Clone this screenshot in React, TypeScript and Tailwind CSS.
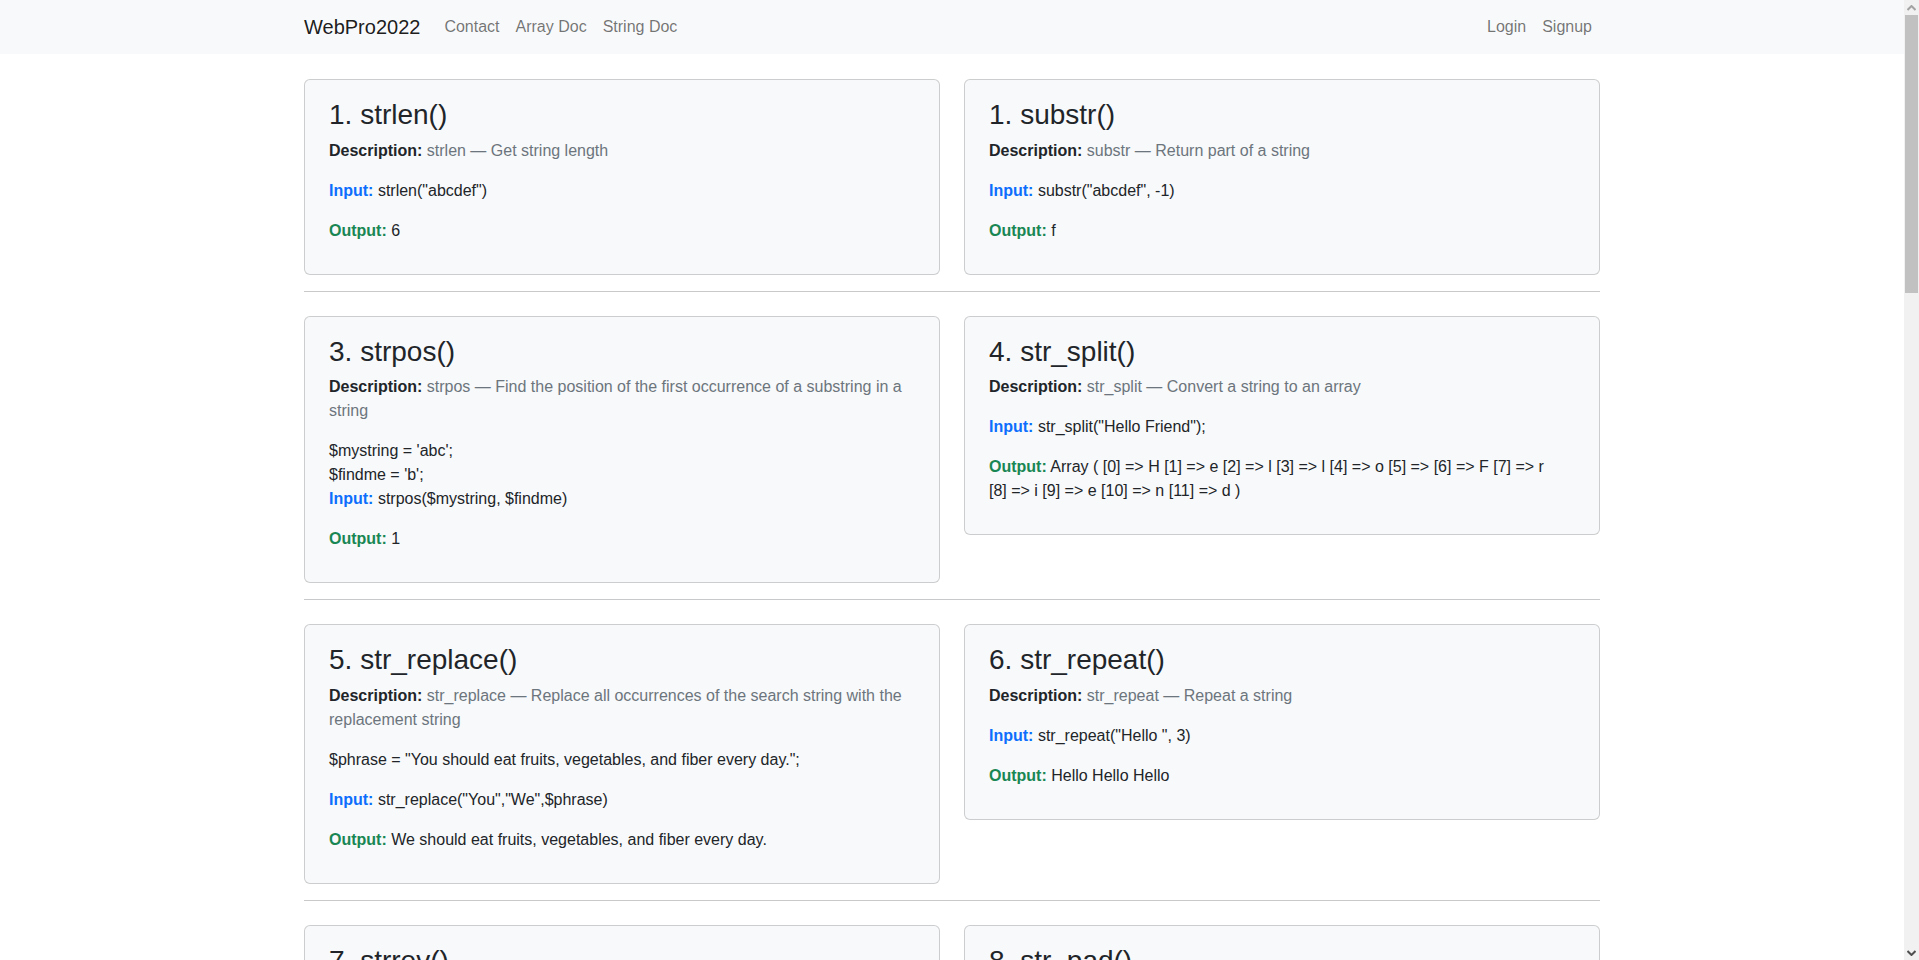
import type { ReactNode } from "react";

interface Doc {
  title: string;
  name: string;
  desc: string;
  pre?: ReactNode;
  preOwn?: boolean;
  input: string;
  output: ReactNode;
}

const rows: Doc[][] = [
  [
    {
      title: "1. strlen()",
      name: "strlen",
      desc: "Get string length",
      input: 'strlen("abcdef")',
      output: "6",
    },
    {
      title: "1. substr()",
      name: "substr",
      desc: "Return part of a string",
      input: 'substr("abcdef", -1)',
      output: "f",
    },
  ],
  [
    {
      title: "3. strpos()",
      name: "strpos",
      desc: "Find the position of the first occurrence of a substring in a string",
      pre: (
        <>
          $mystring = 'abc';
          <br />
          $findme = 'b';
          <br />
        </>
      ),
      input: "strpos($mystring, $findme)",
      output: "1",
    },
    {
      title: "4. str_split()",
      name: "str_split",
      desc: "Convert a string to an array",
      input: 'str_split("Hello Friend");',
      // segoe wraps before [8], the fallback font doesn't
      output: (
        <>
          Array ( [0] =&gt; H [1] =&gt; e [2] =&gt; l [3] =&gt; l [4] =&gt; o [5] =&gt; [6] =&gt; F [7] =&gt; r
          <br />
          [8] =&gt; i [9] =&gt; e [10] =&gt; n [11] =&gt; d )
        </>
      ),
    },
  ],
  [
    {
      title: "5. str_replace()",
      name: "str_replace",
      desc: "Replace all occurrences of the search string with the replacement string",
      pre: '$phrase = "You should eat fruits, vegetables, and fiber every day.";',
      preOwn: true,
      input: 'str_replace("You","We",$phrase)',
      output: "We should eat fruits, vegetables, and fiber every day.",
    },
    {
      title: "6. str_repeat()",
      name: "str_repeat",
      desc: "Repeat a string",
      input: 'str_repeat("Hello ", 3)',
      output: "Hello Hello Hello",
    },
  ],
  [
    {
      title: "7. strrev()",
      name: "strrev",
      desc: "Reverse a string",
      input: 'strrev("Hello world!")',
      output: "!dlrow olleH",
    },
    {
      title: "8. str_pad()",
      name: "str_pad",
      desc: "Pad a string to a certain length with another string",
      input: 'str_pad("Hello", 10, ".")',
      output: "Hello.....",
    },
  ],
];

function DocCard({ d }: { d: Doc }) {
  return (
    <div className="rounded-md border border-black/[0.175] bg-[#f8f9fa] px-6 pt-[17px] pb-[15px]">
      <h3 className="mb-[7px] pt-px text-[28px] leading-[1.2] font-medium">{d.title}</h3>
      <p className="mb-4">
        <b className="font-bold">Description:</b>{" "}
        <span className="text-[#6c757d]">
          {d.name} — {d.desc}
        </span>
      </p>
      {d.preOwn && <p className="mb-4">{d.pre}</p>}
      <p className="mb-4">
        {!d.preOwn && d.pre}
        <b className="font-bold text-[#0d6efd]">Input:</b> {d.input}
      </p>
      <p className="mb-4">
        <b className="font-bold text-[#198754]">Output:</b> {d.output}
      </p>
    </div>
  );
}

function Scrollbar() {
  return (
    <div className="flex w-[15px] shrink-0 flex-col bg-[#f1f1f1]">
      <div className="flex h-[15px] items-center justify-center">
        <svg width="9" height="6" viewBox="0 0 9 6">
          <path d="M0.5 5 L4.5 1 L8.5 5" fill="none" stroke="#a3a3a3" strokeWidth="2" />
        </svg>
      </div>
      <div className="mx-px h-[278px] bg-[#c1c1c1]" />
      <div className="flex-1" />
      <div className="flex h-[15px] items-center justify-center">
        <svg width="9" height="6" viewBox="0 0 9 6">
          <path d="M0.5 1 L4.5 5 L8.5 1" fill="none" stroke="#505050" strokeWidth="2" />
        </svg>
      </div>
    </div>
  );
}

export default function App() {
  return (
    <div className="flex h-[960px] overflow-hidden bg-white font-['Liberation_Sans',Arial,sans-serif] text-base leading-6 text-[#212529]">
      <div className="min-w-0 flex-1">
        <nav className="h-[54px] bg-[#f8f9fa]">
          <div className="mx-auto flex h-full max-w-[1320px] items-center px-3">
            <span className="mr-4 text-[20px] leading-[30px] text-black/90">WebPro2022</span>
            <div className="flex">
              {["Contact", "Array Doc", "String Doc"].map((l) => (
                <span key={l} className="px-2 text-black/55">
                  {l}
                </span>
              ))}
            </div>
            <div className="ml-auto flex">
              {["Login", "Signup"].map((l) => (
                <span key={l} className="px-2 text-black/55">
                  {l}
                </span>
              ))}
            </div>
          </div>
        </nav>

        <main className="mx-auto max-w-[1320px] px-3 pt-[25px]">
          {rows.map((pair, i) => (
            <div key={i}>
              <div className="grid grid-cols-2 items-start gap-6">
                {pair.map((d) => (
                  <DocCard key={d.title} d={d} />
                ))}
              </div>
              {i < rows.length - 1 && (
                <hr className="mt-4 mb-6 border-t border-[#c8c9ca]" />
              )}
            </div>
          ))}
        </main>
      </div>
      <Scrollbar />
    </div>
  );
}
